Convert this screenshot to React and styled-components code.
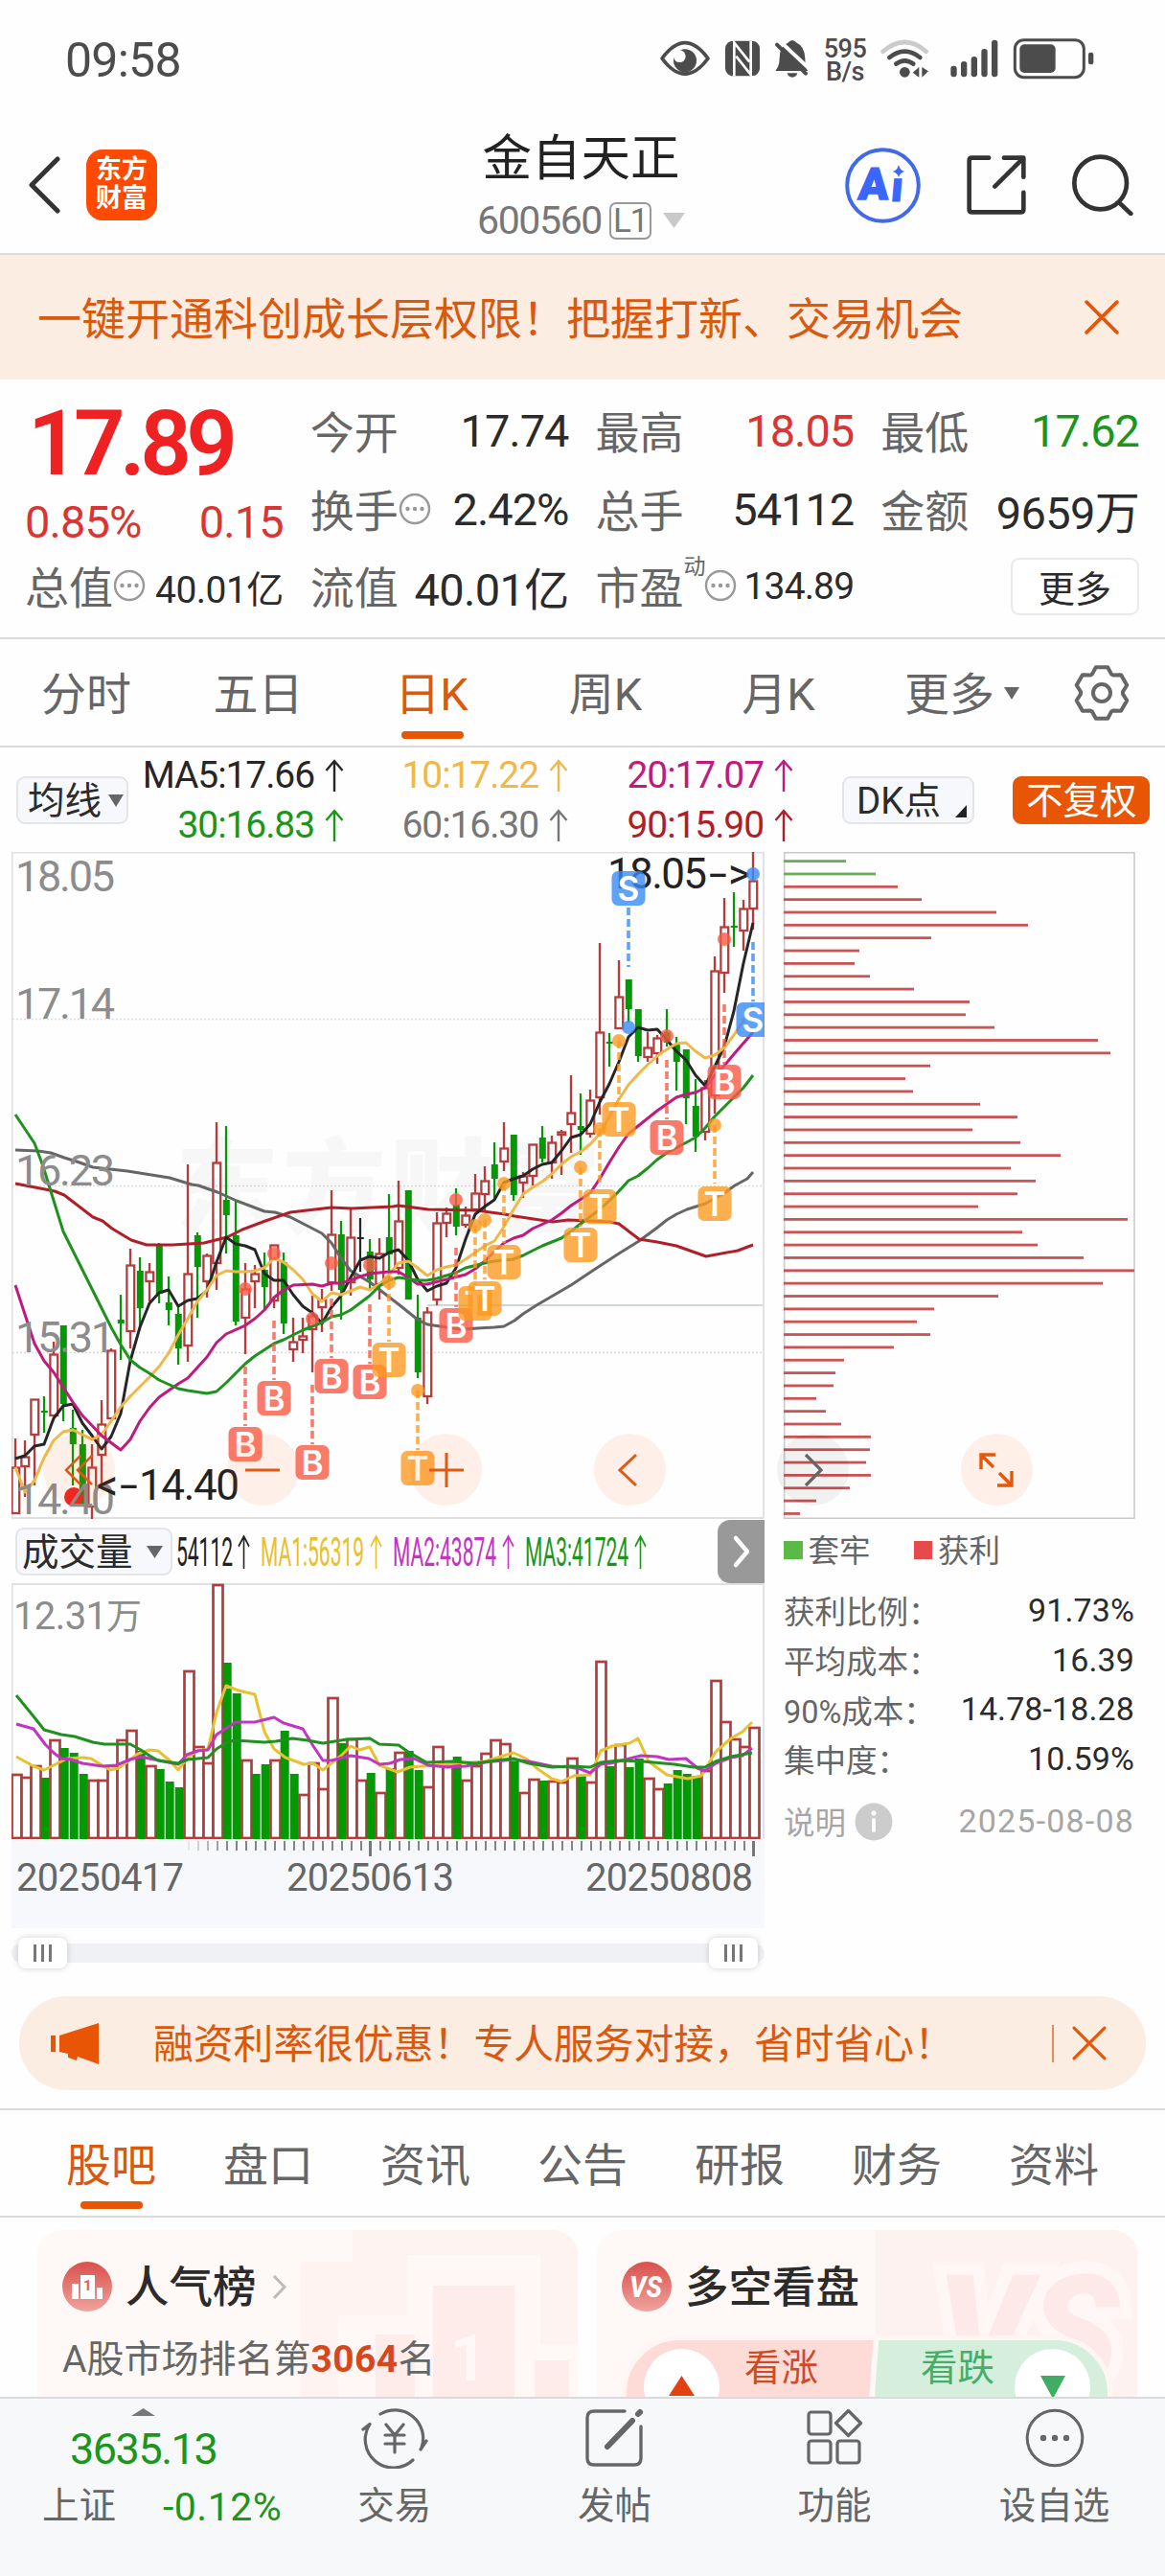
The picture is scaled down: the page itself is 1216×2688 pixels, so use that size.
import React from "react";
import styled, { createGlobalStyle, css } from "styled-components";

const RED = "#b93a3a";
const GREEN = "#029a02";
const ORANGE = "#e85505";

// [type, high, bodyTop, bodyBottom, low], one entry per trading day
const candles = [
  ["r", 612, 642, 690, 690], ["r", 614, 631, 641, 673], ["r", 571, 571, 608, 661], ["g", 568, 583, 585, 606],
  ["r", 511, 524, 588, 588], ["g", 494, 494, 576, 594], ["g", 582, 601, 618, 661], ["g", 603, 618, 681, 681],
  ["r", 618, 642, 683, 696], ["r", 572, 597, 629, 661], ["r", 518, 520, 591, 591], ["g", 462, 488, 492, 530],
  ["r", 414, 431, 500, 518], ["g", 423, 437, 476, 499], ["r", 429, 438, 448, 469], ["g", 408, 409, 461, 471],
  ["g", 443, 470, 478, 494], ["g", 474, 482, 518, 535], ["r", 326, 440, 515, 532], ["g", 397, 400, 433, 486],
  ["r", 419, 421, 448, 465], ["r", 282, 324, 429, 457], ["g", 286, 363, 379, 419], ["g", 363, 400, 490, 494],
  ["r", 429, 456, 486, 524], ["r", 431, 440, 448, 476], ["g", 418, 436, 454, 478], ["r", 410, 410, 468, 476],
  ["g", 418, 428, 492, 503], ["r", 486, 511, 519, 532], ["r", 486, 505, 509, 523], ["r", 463, 484, 498, 543],
  ["r", 456, 467, 475, 501], ["r", 353, 399, 449, 458], ["g", 385, 399, 457, 488], ["r", 372, 402, 449, 463],
  ["k", 382, 402, 403, 438], ["g", 404, 417, 446, 458], ["r", 403, 419, 451, 467], ["g", 357, 402, 420, 447],
  ["r", 343, 385, 434, 441], ["g", 353, 353, 467, 467], ["g", 462, 486, 543, 549], ["r", 475, 480, 568, 576],
  ["r", 376, 387, 467, 473], ["r", 371, 377, 387, 402], ["g", 351, 368, 391, 400], ["r", 370, 379, 389, 392],
  ["r", 336, 356, 373, 374], ["r", 328, 343, 357, 374], ["g", 303, 326, 341, 361], ["r", 282, 309, 323, 333],
  ["g", 295, 295, 358, 364], ["r", 334, 338, 345, 361], ["r", 305, 305, 338, 348], ["g", 286, 298, 320, 324],
  ["r", 296, 303, 324, 341], ["r", 290, 292, 295, 337], ["r", 233, 272, 284, 314], ["g", 252, 286, 290, 316],
  ["r", 248, 259, 294, 298], ["r", 95, 188, 256, 274], ["g", 189, 198, 200, 224], ["r", 113, 151, 184, 184],
  ["g", 133, 133, 164, 178], ["g", 164, 164, 213, 219], ["r", 188, 204, 214, 219], ["r", 191, 194, 210, 221],
  ["g", 164, 188, 199, 203], ["g", 193, 201, 219, 249], ["g", 206, 206, 257, 284], ["g", 237, 265, 297, 313],
  ["r", 238, 246, 292, 301], ["r", 109, 124, 254, 273], ["r", 48, 78, 126, 147], ["g", 42, 77, 79, 99],
  ["r", 50, 59, 82, 103], ["r", 0, 30, 59, 81],
];

const ma5 = [
  633, 630, 620, 618, 591, 578, 576, 596, 609, 623, 610, 586, 531, 496, 471, 460, 457, 474, 468, 466,
  458, 428, 402, 409, 411, 415, 440, 447, 447, 462, 474, 481, 492, 475, 463, 444, 426, 422, 424, 418,
  415, 426, 446, 458, 453, 450, 434, 404, 378, 370, 363, 345, 341, 338, 331, 326, 324, 312, 298, 295,
  284, 261, 242, 219, 193, 183, 186, 185, 196, 208, 217, 233, 244, 224, 203, 166, 116, 74,
];
const ma10 = [
  642, 668, 656, 632, 614, 605, 603, 608, 613, 608, 594, 579, 568, 558, 548, 537, 523, 504, 487, 469,
  457, 442, 437, 438, 438, 437, 434, 424, 428, 436, 446, 461, 469, 460, 462, 458, 454, 457, 451, 441,
  429, 427, 434, 442, 436, 433, 431, 425, 418, 411, 406, 391, 373, 357, 350, 344, 336, 326, 318, 313,
  305, 294, 276, 258, 243, 232, 222, 213, 206, 200, 199, 208, 215, 212, 204, 191, 176, 159,
];
const daily = (values) => values.map((v, i) => `${16 + i * 10},${v}`).join(" ");

const averages = [
  { color: "#666666", points: "16,311 40,312 53,314 67,319 80,323 97,329 133,333 177,340 200,347 207,348 227,355 247,364 276,375 287,376 303,381 336,398 346,408 356,424 366,437 386,449 416,472 436,488 446,493 466,496 483,498 516,496 526,495 537,489 546,482 560,473 596,452 620,436 646,419 667,406 686,392 696,384 706,378 717,373 736,367 756,356 767,348 780,341 786,334" },
  { color: "#b01f28", points: "16,346 47,352 57,354 67,358 97,381 107,385 117,393 137,405 153,410 180,410 213,408 237,402 253,394 277,385 303,376 346,371 367,372 410,370 416,369 447,373 497,374 527,378 537,380 577,386 593,384 637,386 646,388 667,404 686,407 706,411 737,422 770,416 786,410" },
  { color: "#262626", points: daily(ma5) },
  { color: "#f0b84a", points: daily(ma10) },
  { color: "#bf1a7c", points: "16,452 36,513 46,531 56,543 76,574 86,588 106,609 126,624 136,613 146,594 156,580 166,569 186,555 196,549 216,527 226,512 236,503 256,494 266,487 276,478 286,465 296,457 306,452 326,451 336,453 346,450 356,450 366,447 376,443 386,440 406,438 416,438 426,444 436,451 446,451 466,446 486,441 496,435 506,427 516,417 526,408 536,403 546,400 556,393 576,384 586,377 596,369 616,356 626,341 636,324 646,308 656,294 666,286 686,270 696,263 706,256 716,253 726,251 736,246 746,233 756,223 766,211 786,188" },
  { color: "#1f911f", points: "16,274 36,304 45,328 53,354 66,396 86,436 106,476 116,496 126,514 136,530 146,538 156,544 166,551 186,560 196,562 216,565 226,563 236,554 246,544 256,534 266,526 286,513 296,509 316,499 336,491 346,485 356,483 366,478 386,463 396,453 406,447 416,444 436,447 446,447 456,445 476,439 486,434 506,429 516,427 536,425 546,421 566,411 586,403 596,396 606,388 626,373 636,364 646,354 656,343 666,338 676,330 686,321 696,314 726,298 736,288 746,276 766,256 776,246 786,233" },
];

// [letter, x, badge centre, dash start, dash end, dot]
const signals = [
  ["B", 256, 618, 537, 599, 456], ["B", 286, 570, 489, 551, 419], ["B", 326, 637, 556, 618, 487],
  ["B", 346, 547, 466, 528, 429], ["B", 386, 553, 472, 534, 431], ["T", 406, 530, 449, 511, 449],
  ["T", 436, 643, 562, 624, 562], ["B", 476, 494, 413, 475, 363], ["T", 496, 471, 390, 452, 390],
  ["T", 506, 466, 384, 446, 384], ["T", 526, 428, 346, 408, 346], ["T", 606, 410, 329, 391, 329],
  ["T", 626, 370, 289, 349, 289], ["T", 646, 279, 197, 258, 197], ["S", 656, 38, 58, 120, 183],
  ["B", 696, 298, 217, 279, 192], ["T", 746, 367, 285, 346, 285], ["B", 756, 240, 159, 221, 91],
  ["S", 786, 175, 94, 156, 23],
];
const signalColors = { B: "#fa5a46", T: "#fd9a22", S: "#3a8bf7" };

const volumes = [
  "r199", "r202", "r190", "g203", "r163", "g172", "g177", "g199", "r205", "r205", "r190", "r163", "r153",
  "g175", "r190", "g194", "g207", "g213", "r91", "r170", "r187", "r1", "g83", "g115", "r184", "g199",
  "g189", "r184", "g154", "g199", "r220", "r187", "r214", "r119", "g167", "r162", "r205", "g198", "r218",
  "g193", "r176", "g175", "g195", "r212", "r170", "r189", "g181", "r205", "r190", "r177", "r163", "r167",
  "g186", "r218", "r204", "g206", "r206", "r207", "r182", "g201", "r207", "r81", "g191", "r168", "g192",
  "g183", "r203", "r214", "g209", "g195", "g199", "g201", "r195", "r101", "r144", "r162", "r170", "r150",
];
const volumeLines = [
  { color: "#e9c02d", points: "17,181 35,191 46,195 56,190 70,183 86,182 95,183 115,195 124,193 144,178 156,174 165,175 177,185 186,195 195,183 206,175 217,173 226,135 236,107 249,112 266,116 276,155 286,173 298,182 317,189 327,188 337,195 356,180 366,170 375,174 386,171 396,190 415,197 428,192 467,189 475,188 506,186 536,177 549,183 560,193 576,204 586,207 599,201 616,200 627,175 639,170 657,167 666,162 677,186 696,200 718,204 732,201 747,176 763,162 775,155 785,145" },
  { color: "#c334c3", points: "17,147 35,152 47,168 56,177 64,183 74,184 86,188 107,191 121,190 136,184 147,181 156,183 171,186 186,189 195,179 206,175 217,174 226,158 246,145 266,145 286,140 296,146 316,152 327,170 337,185 346,185 366,180 385,183 396,189 407,188 418,184 432,183 447,190 467,192 486,191 506,187 536,184 552,186 576,191 595,192 606,194 616,198 627,189 637,188 657,183 669,180 686,181 698,184 716,183 728,193 736,196 747,188 763,182 775,180 785,172" },
  { color: "#1f911f", points: "17,117 35,139 46,153 64,158 78,160 97,166 109,168 136,168 147,174 156,180 165,185 186,188 196,184 217,182 226,173 237,166 245,164 276,166 288,165 305,162 321,164 337,167 362,163 386,162 396,168 416,169 426,176 445,187 473,186 496,188 517,185 536,183 552,188 576,192 595,191 616,192 627,187 647,185 671,186 704,189 724,192 736,192 747,186 763,181 785,177" },
];

const chips = [
  65, 96, 119, 144, 222, 255, 154, 79, 74, 90, 136, 194, 190, 220, 328, 341, 153, 127, 135, 205, 244, 197,
  247, 289, 237, 263, 244, 203, 359, 249, 265, 313, 366, 333, 224, 157, 139, 153, 115, 63, 54, 52, 34, 44,
  60, 91, 90, 86, 91, 69, 34, 17,
];

const GlobalStyle = createGlobalStyle`
  * { box-sizing: border-box; }
  body {
    margin: 0;
    background: #fff;
    font-family: Roboto, "Noto Sans CJK SC", sans-serif;
    color: #666;
  }
`;

const Page = styled.div`
  width: 1216px;
  height: 2688px;
  overflow: hidden;
  background: #fefefe;
  white-space: nowrap;
`;

/* ---------- status bar ---------- */
const StatusBar = styled.div`
  height: 125px;
  padding: 0 74px 0 68px;
  display: flex;
  align-items: flex-start;
  justify-content: space-between;
  color: #4c4c4c;
`;
const Clock = styled.div`
  margin-top: 35px;
  font-size: 50px;
  line-height: 56px;
  letter-spacing: -0.015em;
`;
const StatusIcons = styled.div`
  display: flex;
  margin-top: 40px;
  svg { display: block; height: 43.33px; }
`;
const Speed = styled.div`
  width: 60px;
  text-align: center;
  font-size: 27px;
  line-height: 23.5px;
  font-weight: 500;
  letter-spacing: -0.02em;
`;

/* ---------- header ---------- */
const Header = styled.header`
  height: 141px;
  padding: 0 33px 0 30px;
  display: grid;
  grid-template-columns: 1fr auto 1fr;
  border-bottom: 2px solid #dadada;
`;
const HeaderSide = styled.div`
  display: flex;
  align-items: center;
  height: 136px;
  ${(p) => p.$end && css`justify-content: flex-end; gap: 48px;`}
`;
const Logo = styled.div`
  margin-left: 27px;
  width: 74px;
  height: 74px;
  padding-top: 6px;
  border-radius: 17px;
  background: #ff4a00;
  color: #fff;
  font-size: 27px;
  font-weight: 700;
  line-height: 30px;
  text-align: center;
`;
const Title = styled.div`
  text-align: center;
  margin-top: 8px;
  h1 {
    margin: 0;
    font-size: 51.5px;
    font-weight: 400;
    line-height: 66px;
    color: #222;
  }
`;
const Code = styled.div`
  display: flex;
  align-items: center;
  justify-content: center;
  height: 64px;
  padding-bottom: 2px;
  font-size: 41px;
  letter-spacing: -0.034em;
  color: #777;
  svg { margin-left: 12px; }
`;
const Level = styled.span`
  margin-left: 8px;
  width: 44px;
  height: 39px;
  border: 2px solid #999;
  border-radius: 7px;
  font-size: 35px;
  line-height: 36px;
  text-align: center;
`;

/* ---------- banner ---------- */
const Banner = styled.div`
  height: 130px;
  padding: 0 48px 4px 39px;
  display: flex;
  align-items: center;
  justify-content: space-between;
  background: #fcede3;
  color: #d9590f;
  font-size: 46px;
  svg { margin-top: 3px; }
`;

/* ---------- quote ---------- */
const Quote = styled.section`
  height: 271px;
  padding: 13px 27px 0 26px;
  display: grid;
  grid-template-columns: repeat(4, 1fr);
  grid-template-rows: 82px 82px 78px;
  column-gap: 28px;
  border-bottom: 2px solid #dadada;
`;
const PriceBlock = styled.div`
  grid-row: span 2;
  color: #d93535;
`;
const Price = styled.div`
  padding-left: 3px;
  font-size: 94px;
  font-weight: 600;
  line-height: 108px;
  letter-spacing: -0.06em;
  color: #ee2222;
`;
const Change = styled.div`
  display: flex;
  justify-content: space-between;
  font-size: 47px;
  line-height: 56px;
  letter-spacing: -0.02em;
`;
const Cell = styled.div`
  display: flex;
  align-items: center;
  padding-bottom: 4px;
  font-size: 46px;
  color: #666;
  svg { margin-top: 2px; }
`;
const Value = styled.span`
  margin-left: auto;
  padding-top: 3px;
  font-size: ${(p) => (p.$small ? 39 : 47)}px;
  letter-spacing: ${(p) => (p.$mixed ? -0.014 : -0.022)}em;
  color: ${(p) => p.$color || "#2b2b2b"};
`;
const Sup = styled.sup`
  align-self: flex-start;
  margin-right: -2px;
  font-size: 23px;
  line-height: 38px;
`;
const MoreButton = styled.button`
  margin: 3px 0 0 auto;
  width: 134px;
  height: 60px;
  padding: 0 0 4px;
  border: 2px solid #e9e9eb;
  border-radius: 9px;
  background: #fff;
  font: 38px Roboto, "Noto Sans CJK SC", sans-serif;
  color: #2b2b2b;
`;

/* ---------- tabs ---------- */
const PeriodTabs = styled.nav`
  height: 113px;
  display: flex;
  align-items: center;
  border-bottom: 2px solid #dadada;
  svg { display: block; }
`;
const Tab = styled.div`
  position: relative;
  width: ${(p) => p.$width}px;
  height: 100%;
  padding-bottom: 4px;
  display: flex;
  align-items: center;
  justify-content: center;
  gap: 10px;
  font-size: 47px;
  color: ${(p) => (p.$active ? "#d9590f" : "#666")};
  ${(p) => p.$active && css`
    &::after {
      content: "";
      position: absolute;
      left: calc(50% - 32px);
      bottom: 7px;
      width: 65px;
      height: 8px;
      border-radius: 4px;
      background: ${ORANGE};
    }
  `}
  svg { margin-top: 5px; }
`;

/* ---------- moving averages ---------- */
const MaRow = styled.div`
  height: 109px;
  padding: 0 16px 0 17px;
  display: flex;
  align-items: center;
`;
const Chip = styled.div`
  position: relative;
  width: ${(p) => p.$width}px;
  height: 50px;
  margin-left: ${(p) => p.$left || 0};
  padding: 0 0 5px ${(p) => p.$pad || 10}px;
  display: flex;
  align-items: center;
  gap: ${(p) => p.$gap || 7}px;
  border: 2px solid ${(p) => (p.$solid ? ORANGE : "#e3e5e9")};
  border-radius: 9px;
  background: ${(p) => (p.$solid ? ORANGE : "#f7f8fb")};
  color: ${(p) => (p.$solid ? "#fff" : "#2b2b2b")};
  font-size: 38.5px;
  svg { margin-top: 6px; }
`;
const Corner = styled.svg`
  position: absolute;
  right: 6px;
  bottom: 5px;
`;
const MaGrid = styled.div`
  width: 694px;
  display: grid;
  grid-template-columns: 225px 234px 235px;
  line-height: 52px;
  font-size: 39px;
  letter-spacing: -0.028em;
`;
const MaValue = styled.div`
  display: flex;
  align-items: center;
  justify-content: flex-end;
  gap: 11px;
  color: ${(p) => p.$color};
`;

/* ---------- chart area ---------- */
const ChartArea = styled.section`
  position: relative;
  height: 1174px;
  padding-left: 12px;
  display: flex;
  gap: 20px;
  svg { display: block; }
`;
const ChartColumn = styled.div`
  width: 786px;
`;
const RoundButton = styled.button`
  position: absolute;
  left: ${(p) => p.$x - 37.5}px;
  top: 607px;
  width: 75px;
  height: 75px;
  padding: 0;
  display: flex;
  align-items: center;
  justify-content: center;
  border: 0;
  border-radius: 50%;
  background: ${(p) => (p.$muted ? "rgba(0,0,0,.05)" : "rgba(250,100,20,.09)")};
`;
const IndicatorRow = styled.div`
  height: 67px;
  padding-left: 4px;
  display: flex;
  align-items: center;
`;
const Squeezed = styled.div`
  width: ${(p) => p.$width}px;
  margin-left: ${(p) => p.$gap}px;
  display: flex;
  align-items: center;
  justify-content: space-between;
  color: ${(p) => p.$color};
  span {
    width: 0;
    font-size: 43px;
    transform: scaleX(0.488);
    transform-origin: left;
  }
`;
const NextButton = styled.div`
  margin-left: auto;
  width: 49px;
  height: 66px;
  display: flex;
  align-items: center;
  justify-content: center;
  border-radius: 13px 0 0 13px;
  background: #999;
`;
const Slider = styled.div`
  margin-top: 16px;
  height: 20px;
  padding: 0 7px;
  display: flex;
  align-items: center;
  justify-content: space-between;
  border-radius: 10px;
  background: #f0f1f4;
`;
const Thumb = styled.div`
  width: 51px;
  height: 32px;
  display: flex;
  align-items: center;
  justify-content: center;
  gap: 5.5px;
  border-radius: 8px;
  background: #fff;
  box-shadow: 0 0 7px rgba(0, 0, 0, 0.18);
  i { width: 2.5px; height: 18px; background: #777; }
`;

const ChipColumn = styled.div`
  width: 366px;
`;
const Legend = styled.div`
  height: 65px;
  padding-bottom: 4px;
  display: flex;
  align-items: center;
  font-size: 32.5px;
`;
const Square = styled.i`
  width: 19.5px;
  height: 19.5px;
  margin: 4px 6px 0 ${(p) => p.$gap || 0}px;
  background: ${(p) => p.$color};
`;
const Stats = styled.div`
  padding-top: 4px;
`;
const Stat = styled.div`
  height: 51.7px;
  margin-top: ${(p) => (p.$muted ? 13 : 0)}px;
  display: flex;
  align-items: center;
  font-size: 32.5px;
  color: ${(p) => (p.$muted ? "#a6a6a6" : "#666")};
  svg { margin: 2px 0 0 9px; }
  b {
    margin-left: auto;
    font-weight: 400;
    font-size: 34px;
    letter-spacing: ${(p) => (p.$muted ? 0.035 : 0.003)}em;
    color: ${(p) => (p.$muted ? "#a6a6a6" : "#2b2b2b")};
  }
`;

/* ---------- promo ---------- */
const Promo = styled.div`
  height: 98px;
  margin: 20px 20px 19px;
  padding: 0 41px 0 33px;
  display: flex;
  align-items: center;
  border-radius: 49px;
  background: #fcede3;
  color: #d9590f;
  font-size: 41.8px;
  p { margin: 0 auto 0 57px; padding-bottom: 4px; }
  em { width: 2px; height: 39px; margin-right: 19px; background: #e58b58; }
`;
const ForumTabs = styled.nav`
  height: 114px;
  padding-left: 34px;
  display: flex;
  border-top: 2px solid #dadada;
  border-bottom: 2px solid #dadada;
`;

/* ---------- cards ---------- */
const Cards = styled.section`
  height: 187px;
  padding: 13px 29px 0 39px;
  display: flex;
  gap: 20px;
  overflow: hidden;
`;
const Card = styled.article`
  position: relative;
  width: 564px;
  height: 260px;
  border-radius: 26px;
  overflow: hidden;
  background: #fef8f6;
`;
const Decor = styled.svg`
  position: absolute;
  inset: 0;
`;
const CardBody = styled.div`
  position: relative;
  padding: 30px 26px;
`;
const CardTitle = styled.div`
  display: flex;
  align-items: center;
  height: 58px;
  font-size: 45.5px;
  font-weight: 500;
  color: #2b2b2b;
  svg { margin-right: 14px; }
  span { padding-bottom: 7px; }
  svg + span + svg { margin: 0 0 0 16px; }
`;
const Rank = styled.div`
  margin-top: 17px;
  line-height: 60px;
  font-size: 39px;
  letter-spacing: 0;
  b { color: #d4481c; letter-spacing: 0.01em; }
`;
const Vote = styled.div`
  position: absolute;
  left: 26px;
  top: 110px;
  width: 512px;
  height: 180px;
  padding: 0 18px;
  display: flex;
  justify-content: space-between;
  border: 5px solid #fff6f4;
  border-radius: 60px;
  background: linear-gradient(94deg, #fddcd8 50%, #fff8f6 50.2%, #fff8f6 51.1%, #d6efdd 51.3%);
  font-size: 38.5px;
`;
const VoteSide = styled.div`
  display: flex;
  gap: ${(p) => p.$gap}px;
  color: ${(p) => p.$color};
  span { margin-top: 4px; line-height: 50px; }
  div {
    margin-top: 9px;
    width: 79px;
    height: 79px;
    padding-top: 28px;
    border-radius: 50%;
    background: #fff;
  }
  svg { display: block; margin: 0 auto; }
`;

/* ---------- bottom bar ---------- */
const BottomBar = styled.footer`
  height: 188px;
  display: flex;
  border-top: 2px solid #d9dadd;
  background: #f7f8fa;
  font-size: 38.5px;
`;
const IndexBox = styled.div`
  width: 297px;
  padding: 10px 4px 0 44px;
  svg { display: block; margin-left: 93px; }
  color: #1a961a;
`;
const IndexValue = styled.div`
  margin: 13px 0 0 29px;
  font-size: 45px;
  line-height: 44px;
  letter-spacing: -0.033em;
`;
const IndexChange = styled.div`
  display: flex;
  gap: 49px;
  margin-top: 10px;
  line-height: 56px;
  font-size: 41px;
  letter-spacing: 0.012em;
  span { color: #666; font-size: 38.5px; letter-spacing: 0; line-height: 54px; }
`;
const NavItem = styled.div`
  width: 229.6px;
  padding-top: 9px;
  text-align: center;
  svg { display: block; margin: 0 auto 11px; }
  line-height: 56px;
`;

/* ---------- icons ---------- */
const Close = ({ size = 34, w = 3.4 }) => (
  <svg width={size} height={size} viewBox="0 0 34 34" stroke={ORANGE} strokeWidth={w} strokeLinecap="round">
    <path d="M2 2 32 32M32 2 2 32" />
  </svg>
);
const Triangle = ({ width, height, color = "#666", up }) => (
  <svg width={width} height={height} viewBox="0 0 20 20" preserveAspectRatio="none">
    <path d={up ? "M10 0 20 20H0z" : "M0 0H20L10 20z"} fill={color} />
  </svg>
);
const Arrow = ({ width = 20, height = 34 }) => (
  <svg width={width} height={height} viewBox="0 0 20 34" preserveAspectRatio="none" fill="none" stroke="currentColor" strokeWidth="2.4">
    <path d="M10 34V2M1.5 12 10 2 18.5 12" />
  </svg>
);
const Dots = () => (
  <svg width="34" height="34" viewBox="0 0 34 34">
    <circle cx="17" cy="17" r="15" fill="none" stroke="#999" strokeWidth="2.4" />
    <g fill="#999">
      <circle cx="9.5" cy="17" r="2.2" /><circle cx="17" cy="17" r="2.2" /><circle cx="24.5" cy="17" r="2.2" />
    </g>
  </svg>
);
const Gear = () => {
  const pts = [];
  for (let i = 0; i < 6; i++) {
    [[-27, 22], [-13, 27.5], [13, 27.5], [27, 22]].forEach(([deg, r]) => {
      const a = ((i * 60 + deg - 90) * Math.PI) / 180;
      pts.push(`${(30 + r * Math.cos(a)).toFixed(1)},${(30 + r * Math.sin(a)).toFixed(1)}`);
    });
  }
  return (
    <svg width="60" height="60" viewBox="0 0 60 60" fill="none" stroke="#666" strokeWidth="4" strokeLinejoin="round">
      <polygon points={pts.join(" ")} />
      <circle cx="30" cy="30" r="9" />
    </svg>
  );
};

const StatusGlyphs = () => (
  <StatusIcons>
    <svg width="60" viewBox="30 30 180 130" fill="#4c4c4c">
      <path d="M36 93Q108-5 180 93Q108 190 36 93Z" fill="none" stroke="#4c4c4c" strokeWidth="11" strokeLinejoin="round" />
      <circle cx="108" cy="100" r="36" />
      <circle cx="91" cy="86" r="19" fill="#fefefe" />
    </svg>
    <svg width="52" viewBox="210 30 156 130">
      <rect x="234" y="38" width="108" height="110" rx="24" fill="#4c4c4c" />
      <path d="M262 148V44L310 104M314 38V144L268 86" fill="none" stroke="#fefefe" strokeWidth="8" />
    </svg>
    <svg width="51.33" viewBox="366 30 154 130">
      <path d="M391 132Q404 116 404 92Q404 54 430 44Q444 28 458 44Q482 54 484 92Q484 116 492 132Z" fill="#4c4c4c" />
      <path d="M428 139H460Q456 152 444 152T428 139Z" fill="#4c4c4c" />
      <path d="M400 34 500 128" stroke="#fefefe" strokeWidth="12" />
      <path d="M396 50 486 140" stroke="#4c4c4c" strokeWidth="12" strokeLinecap="round" />
    </svg>
    <Speed>595<br />B/s</Speed>
    <svg width="68.33" viewBox="700 30 205 130" fill="none" stroke="#4c4c4c" strokeWidth="14" strokeLinecap="round">
      <path d="M729 71Q797 13 864 71" stroke="#cbcbcb" />
      <path d="M749 90Q797 52 845 90M770 110Q797 90 824 110" />
      <circle cx="797" cy="136" r="16" fill="#4c4c4c" stroke="none" />
      <path d="M822 137 842 120V152ZM871 133 851 120V152Z" fill="#4c4c4c" stroke="none" />
    </svg>
    <svg width="68.33" viewBox="905 30 205 130" fill="#4c4c4c">
      {[116, 102, 87, 63, 35].map((y, i) => (
        <rect key={y} x={942 + i * 32} y={y} width="19" height={151 - y} rx="9" />
      ))}
    </svg>
    <svg width="93.33" viewBox="1110 30 280 130" fill="#4c4c4c">
      <rect x="1141" y="35" width="216" height="117" rx="28" fill="none" stroke="#4c4c4c" strokeWidth="9" />
      <rect x="1156" y="49" width="112" height="89" rx="15" />
      <rect x="1371" y="74" width="16" height="38" rx="7" />
    </svg>
  </StatusIcons>
);

/* ---------- charts ---------- */
const Signal = ({ data }) => {
  const [letter, x, y, from, to, dot] = data;
  const color = signalColors[letter];
  return (
    <g>
      <path d={`M${x} ${from}V${to}`} stroke={color} strokeOpacity="0.8" strokeWidth="3.6" strokeDasharray="8 4" />
      <circle cx={x} cy={dot} r="7" fill={color} fillOpacity="0.8" />
      <rect x={x - 17.5} y={y - 18} width="35" height="36" rx="6.5" fill={color} fillOpacity="0.8" />
      <text x={x} y={y + 13} textAnchor="middle" fontSize="35" fontWeight="600" fill="#fff" fontFamily="Inter">{letter}</text>
    </g>
  );
};

const KLine = () => (
  <svg width="786" height="696" viewBox="12 0 786 696">
    <text x="183" y="389" fontSize="108" letterSpacing="4" fontWeight="900" fill="#f7f7f7" fontFamily="Noto Sans CJK SC">东方财富</text>
    <path d="M13 174.5H797M13 348.5H797M13 522.5H797" stroke="#dcdcdc" strokeWidth="1.5" strokeDasharray="2 2" />
    <path d="M446 473H797" stroke="#d0d6d5" strokeWidth="2" />
    <path d="M12.7 695V0.7H797V695Z" fill="none" stroke="#e0e0e0" strokeWidth="1.8" />
    {candles.map(([type, high, top, bottom, low], i) => {
      const x = 16 + i * 10;
      const color = type === "r" ? RED : type === "g" ? GREEN : "#262626";
      if (type === "r") {
        return (
          <g key={i} stroke={color} strokeWidth="2.3" fill="none">
            <path d={`M${x} ${high}V${top}M${x} ${bottom}V${low}`} />
            <rect x={x - 3.6} y={top + 0.5} width="7.8" height={bottom - top - 0.5} />
          </g>
        );
      }
      return (
        <g key={i} fill={color}>
          <rect x={x - 1.1} y={high} width="2.2" height={low - high} />
          <rect x={x - 3.2} y={top} width="7" height={Math.max(bottom - top, 2)} />
        </g>
      );
    })}
    {averages.map((l) => (
      <polyline key={l.color} points={l.points} fill="none" stroke={l.color} strokeWidth="3" strokeLinejoin="round" />
    ))}
    <circle cx="77" cy="673" r="10" fill="#ee2222" />
    <g fill="#8c8c8c" fontSize="45">
      {[["18.05", 41], ["17.14", 174], ["16.23", 348], ["15.31", 522], ["14.40", 691]].map(([t, y]) => (
        <text key={t} x="16" y={y} textLength="104">{t}</text>
      ))}
    </g>
    <g fill="#222" fontSize="44">
      <text x="634" y="38" textLength="104">18.05</text>
      <text x="740" y="38" textLength="19" lengthAdjust="spacingAndGlyphs">-</text>
      <text x="760" y="38" textLength="22">&gt;</text>
      <text x="101" y="676" textLength="22">&lt;</text>
      <text x="125" y="676" textLength="19" lengthAdjust="spacingAndGlyphs">-</text>
      <text x="145" y="676" textLength="105">14.40</text>
    </g>
    {signals.map((s) => <Signal key={s[1]} data={s} />)}
  </svg>
);

const Volume = () => (
  <svg width="786" height="267" viewBox="12 0 786 267">
    <path d="M12.7 267V1H797V267" fill="none" stroke="#e0e0e0" strokeWidth="1.8" />
    <text x="14" y="48" fontSize="40" textLength="98" fill="#8c8c8c">12.31</text>
    <text x="111" y="48" fontSize="37" fill="#8c8c8c">万</text>
    {volumes.map((v, i) => {
      const top = Number(v.slice(1));
      const x = 12 + i * 10;
      return v[0] === "r"
        ? <rect key={i} x={x + 0.5} y={top + 1} width="10" height={265 - top} fill="#fff" stroke={RED} strokeWidth="2.7" />
        : <rect key={i} x={x + 0.7} y={top} width="9" height={267 - top} fill={GREEN} />;
    })}
    {volumeLines.map((l) => (
      <polyline key={l.color} points={l.points} fill="none" stroke={l.color} strokeWidth="3" strokeLinejoin="round" />
    ))}
  </svg>
);

const Axis = () => (
  <svg width="786" height="93" viewBox="12 0 786 93">
    <rect x="12" width="786" height="93" fill="#f7f8fb" />
    {Array.from({ length: 60 }, (_, i) => {
      const x = 197 + i * 10;
      const big = i === 19 || i === 59;
      return <path key={i} d={`M${x - (big ? 0.5 : 0)} 2V${big ? 18 : 12}`} stroke="#777" strokeWidth={big ? 3 : 1.8} strokeOpacity={Math.min(1, 0.15 + i * 0.2)} />;
    })}
    <g fill="#666" fontSize="40">
      <text x="17" y="54" textLength="175">20250417</text>
      <text x="299" y="54" textLength="175">20250613</text>
      <text x="611" y="54" textLength="175">20250808</text>
    </g>
  </svg>
);

const ChipChart = () => (
  <svg width="367" height="696" viewBox="0 0 367 696">
    <path d="M0.7 0.7H366V695.3H0.7Z" fill="none" stroke="#c9c9c9" strokeWidth="1.5" />
    {chips.map((w, i) => (
      <rect key={i} x="0" y={8.2 + i * 13.35} width={w} height="2.8" fill={i < 2 ? "#68ad58" : "#cb5353"} />
    ))}
  </svg>
);

const App = () => {
  return (
    <Page>
      <GlobalStyle />
      <StatusBar>
        <Clock>09:58</Clock>
        <StatusGlyphs />
      </StatusBar>

      <Header>
        <HeaderSide>
          <svg width="33" height="60" viewBox="0 0 33 60" fill="none" stroke="#333" strokeWidth="5" strokeLinecap="round" strokeLinejoin="round">
            <path d="M30 3 3 30 30 57" />
          </svg>
          <Logo>东方<br />财富</Logo>
        </HeaderSide>
        <Title>
          <h1>金自天正</h1>
          <Code>
            600560<Level>L1</Level>
            <Triangle width={23} height={16} color="#c9c9c9" />
          </Code>
        </Title>
        <HeaderSide $end>
          <svg width="79" height="79" viewBox="0 0 79 79" fill="#3a66fb">
            <circle cx="39.5" cy="39.5" r="37.3" fill="none" stroke="#4169e8" strokeWidth="4" />
            <text x="14" y="54" fontSize="46" fontWeight="900" stroke="#3a66fb" strokeWidth="1.5" transform="skewX(-4) translate(3 0)">A</text>
            <text x="48" y="56.5" fontSize="44" fontWeight="900" stroke="#3a66fb" strokeWidth="1" transform="skewX(-5) translate(4 0)">ı</text>
            <path d="M56 18Q57.5 24 62.5 25Q57.5 26 56 31Q54.5 26 49.5 25Q54.5 24 56 18Z" />
          </svg>
          <svg width="62" height="62" viewBox="980 395 188 188" fill="none" stroke="#333" strokeWidth="14" strokeLinecap="round" strokeLinejoin="round">
            <path d="M1050 403H997Q988 403 988 412V566Q988 575 997 575H1151Q1160 575 1160 566V513M1098 403H1160V464M1158 405 1069 494" />
          </svg>
          <svg width="64" height="64" viewBox="1318 389 192 192" fill="none" stroke="#333" strokeWidth="14" strokeLinecap="round">
            <circle cx="1407" cy="479" r="82" />
            <path d="M1466 541 1502 575" />
          </svg>
        </HeaderSide>
      </Header>

      <Banner>
        一键开通科创成长层权限！把握打新、交易机会
        <Close size={36} />
      </Banner>

      <Quote>
        <PriceBlock>
          <Price>17.89</Price>
          <Change><span>0.85%</span><span>0.15</span></Change>
        </PriceBlock>
        <Cell>今开<Value>17.74</Value></Cell>
        <Cell>最高<Value $color="#d93535">18.05</Value></Cell>
        <Cell>最低<Value $color="#1a961a">17.62</Value></Cell>
        <Cell>换手<Dots /><Value>2.42%</Value></Cell>
        <Cell>总手<Value>54112</Value></Cell>
        <Cell>金额<Value $mixed>9659万</Value></Cell>
        <Cell>总值<Dots /><Value $small $mixed>40.01亿</Value></Cell>
        <Cell>流值<Value $mixed>40.01亿</Value></Cell>
        <Cell>市盈<Sup>动</Sup><Dots /><Value $small>134.89</Value></Cell>
        <Cell><MoreButton>更多</MoreButton></Cell>
      </Quote>

      <PeriodTabs>
        <Tab $width={180}>分时</Tab>
        <Tab $width={179}>五日</Tab>
        <Tab $width={183} $active>日K</Tab>
        <Tab $width={180}>周K</Tab>
        <Tab $width={181}>月K</Tab>
        <Tab $width={202}>更多<Triangle width={16} height={13} /></Tab>
        <Tab $width={90}><Gear /></Tab>
      </PeriodTabs>

      <MaRow>
        <Chip $width={117}>均线<Triangle width={16} height={13} /></Chip>
        <MaGrid>
          <MaValue $color="#262626">MA5:17.66<Arrow /></MaValue>
          <MaValue $color="#f0b84a">10:17.22<Arrow /></MaValue>
          <MaValue $color="#bf1a7c">20:17.07<Arrow /></MaValue>
          <MaValue $color="#1a961a">30:16.83<Arrow /></MaValue>
          <MaValue $color="#777">60:16.30<Arrow /></MaValue>
          <MaValue $color="#b01f28">90:15.90<Arrow /></MaValue>
        </MaGrid>
        <Chip $width={138} $pad={13} $left="51px">
          DK点
          <Corner width="12" height="13" viewBox="0 0 12 13"><path d="M12 0V13H0z" fill="#222" /></Corner>
        </Chip>
        <Chip $width={143} $pad={12} $left="auto" $solid>不复权</Chip>
      </MaRow>

      <ChartArea>
        <ChartColumn>
          <KLine />
          <IndicatorRow>
            <Chip $width={164} $pad={5} $gap={14}>成交量<Triangle width={17} height={13} /></Chip>
            <Squeezed $width={77} $gap={4} $color="#222"><span>54112</span><Arrow width={13} height={36} /></Squeezed>
            <Squeezed $width={127} $gap={11} $color="#e9c02d"><span>MA1:56319</span><Arrow width={13} height={36} /></Squeezed>
            <Squeezed $width={127} $gap={11} $color="#c334c3"><span>MA2:43874</span><Arrow width={13} height={36} /></Squeezed>
            <Squeezed $width={127} $gap={11} $color="#1a961a"><span>MA3:41724</span><Arrow width={13} height={36} /></Squeezed>
            <NextButton>
              <svg width="20" height="36" viewBox="0 0 20 36" fill="none" stroke="#fff" strokeWidth="4.5" strokeLinecap="round" strokeLinejoin="round">
                <path d="M4 4 16 18 4 32" />
              </svg>
            </NextButton>
          </IndicatorRow>
          <Volume />
          <Axis />
          <Slider>
            <Thumb><i /><i /><i /></Thumb>
            <Thumb><i /><i /><i /></Thumb>
          </Slider>
        </ChartColumn>

        <ChipColumn>
          <ChipChart />
          <Legend>
            <Square $color="#5bb947" />套牢
            <Square $color="#e64b4b" $gap={45} />获利
          </Legend>
          <Stats>
            <Stat>获利比例<span>：</span><b>91.73%</b></Stat>
            <Stat>平均成本<span>：</span><b>16.39</b></Stat>
            <Stat>90%成本<span>：</span><b>14.78-18.28</b></Stat>
            <Stat>集中度<span>：</span><b>10.59%</b></Stat>
            <Stat $muted>
              说明
              <svg width="40" height="40" viewBox="0 0 40 40">
                <circle cx="20" cy="20" r="19.5" fill="#ccc" />
                <circle cx="20" cy="11" r="2.5" fill="#fff" />
                <rect x="18" y="16" width="4" height="15" rx="2" fill="#fff" />
              </svg>
              <b>2025-08-08</b>
            </Stat>
          </Stats>
        </ChipColumn>

        <RoundButton $x={82.5}>
          <svg width="32" height="36" viewBox="0 0 32 36" fill="none" stroke="#dd5b14" strokeWidth="2.6">
            <path d="M17 3 2 18 17 33M29 3 14 18 29 33" />
          </svg>
        </RoundButton>
        <RoundButton $x={274}>
          <svg width="36" height="36" viewBox="0 0 36 36" stroke="#dd5b14" strokeWidth="3"><path d="M0 18H36" /></svg>
        </RoundButton>
        <RoundButton $x={465.5}>
          <svg width="36" height="36" viewBox="0 0 36 36" stroke="#dd5b14" strokeWidth="3"><path d="M0 18H36M18 0V36" /></svg>
        </RoundButton>
        <RoundButton $x={657}>
          <svg width="24" height="36" viewBox="0 0 24 36" fill="none" stroke="#dd5b14" strokeWidth="3"><path d="M19 2 2 18 19 34" /></svg>
        </RoundButton>
        <RoundButton $x={848.5} $muted>
          <svg width="20" height="36" viewBox="0 0 20 36" fill="none" stroke="#666" strokeWidth="3.2"><path d="M2 2 18 18 2 34" /></svg>
        </RoundButton>
        <RoundButton $x={1040}>
          <svg width="38" height="38" viewBox="0 0 38 38" fill="none" stroke="#e2580c" strokeWidth="3.4">
            <path d="M18 3H3V18M4 4 16 16M20 35H35V20M34 34 22 22" />
          </svg>
        </RoundButton>
      </ChartArea>

      <Promo>
        <svg width="50" height="43" viewBox="0 0 50 43" fill={ORANGE}>
          <rect x="0" y="13" width="5" height="17" />
          <path d="M9 13 50 0V43L28 35L27 39L18 36V32L9 30Z" />
        </svg>
        <p>融资利率很优惠！专人服务对接，省时省心！</p>
        <em />
        <Close size={36} w={3} />
      </Promo>

      <ForumTabs>
        {["股吧", "盘口", "资讯", "公告", "研报", "财务", "资料"].map((name, i) => (
          <Tab key={name} $width={164} $active={i === 0}>{name}</Tab>
        ))}
      </ForumTabs>

      <Cards>
        <Card>
          <Decor width="564" height="260" viewBox="0 0 564 260">
            <path d="M275 33H329V0H564V260H275Z" fill="#fef3f1" />
            <path d="M314 89H386V26H525V119H564V260H314Z" fill="#fff8f6" />
            <path d="M353 109H394V260H353ZM413 58H498V260H413ZM519 136H555V260H519Z" fill="#fdecea" />
            <text x="431" y="157" fontSize="66" fontWeight="700" fill="#fff8f6">1</text>
          </Decor>
          <CardBody>
            <CardTitle>
              <svg width="52" height="52" viewBox="0 0 52 52">
                <defs>
                  <linearGradient id="badge" x2="0" y2="1">
                    <stop stopColor="#d9504c" /><stop offset="1" stopColor="#f0a39e" />
                  </linearGradient>
                </defs>
                <circle cx="26" cy="26" r="26" fill="url(#badge)" />
                <path d="M10 23H17V39H10ZM19 14H34V39H19ZM36 27H42V39H36Z" fill="#fff" />
                <text x="22" y="30" fontSize="15" fontWeight="700" fill="#d9605c">1</text>
              </svg>
              <span>人气榜</span>
              <svg width="15" height="25" viewBox="0 0 15 25" fill="none" stroke="#bbb" strokeWidth="3"><path d="M2 1 13 12.5 2 24" /></svg>
            </CardTitle>
            <Rank>A股市场排名第<b>3064</b>名</Rank>
          </CardBody>
        </Card>
        <Card>
          <Decor width="564" height="260" viewBox="0 0 564 260">
            <rect x="291" width="273" height="260" fill="#fef2f0" />
            <text x="355" y="160" fontSize="160" fontWeight="900" fontStyle="italic" fill="#fdeae8" stroke="#fff7f5" strokeWidth="26" paintOrder="stroke" textLength="190" lengthAdjust="spacingAndGlyphs">VS</text>
          </Decor>
          <CardBody>
            <CardTitle>
              <svg width="52" height="52" viewBox="0 0 52 52">
                <circle cx="26" cy="26" r="26" fill="url(#badge)" />
                <text x="25" y="37" textAnchor="middle" fontSize="31" fontWeight="800" fontStyle="italic" fill="#fff" textLength="34" lengthAdjust="spacingAndGlyphs">VS</text>
              </svg>
              <span>多空看盘</span>
            </CardTitle>
          </CardBody>
          <Vote>
            <VoteSide $color="#cf4a25" $gap={26}>
              <div><Triangle up width={27} height={21} color="#e2420f" /></div>
              <span>看涨</span>
            </VoteSide>
            <VoteSide $color="#45ae6b" $gap={21}>
              <span>看跌</span>
              <div><Triangle width={26} height={24} color="#3fae63" /></div>
            </VoteSide>
          </Vote>
        </Card>
      </Cards>

      <BottomBar>
        <IndexBox>
          <Triangle up width={25} height={8} color="#777" />
          <IndexValue>3635.13</IndexValue>
          <IndexChange><span>上证</span>-0.12%</IndexChange>
        </IndexBox>
        <NavItem>
          <svg width="72" height="64" viewBox="-4 0 72 64" fill="none" stroke="#666" strokeWidth="3.2" strokeLinecap="round" strokeLinejoin="round">
            <path d="M17 7A29.5 29.5 0 0 1 60 42M65 35 59 44" />
            <path d="M-1 23 6 17.5A29.5 29.5 0 0 0 51 55" />
            <path d="M23 18 32 29 41 18M32 29V47M22 29H42M22 38H42" />
          </svg>
          交易
        </NavItem>
        <NavItem>
          <svg width="64" height="64" viewBox="0 0 64 64" fill="none" stroke="#666" strokeWidth="3.4" strokeLinecap="round" strokeLinejoin="round">
            <path d="M43 4H11Q4 4 4 11V53Q4 60 11 60H53Q60 60 60 53V20" />
            <path d="M25 41 51 14" strokeWidth="6" />
            <path d="M57 7 59 5" strokeWidth="6" />
          </svg>
          发帖
        </NavItem>
        <NavItem>
          <svg width="64" height="64" viewBox="0 0 64 64" fill="none" stroke="#666" strokeWidth="3.2" strokeLinejoin="round">
            <rect x="5" y="5" width="23" height="23" rx="3" />
            <rect x="5" y="35" width="23" height="23" rx="3" />
            <rect x="35" y="35" width="23" height="23" rx="3" />
            <path d="M46.5 3.5 59.5 16.5 46.5 29.5 33.5 16.5Z" />
          </svg>
          功能
        </NavItem>
        <NavItem>
          <svg width="64" height="64" viewBox="0 0 64 64" fill="#666">
            <circle cx="32" cy="32" r="28.8" fill="none" stroke="#666" strokeWidth="3" />
            <circle cx="20" cy="32" r="3.2" /><circle cx="32" cy="32" r="3.2" /><circle cx="44" cy="32" r="3.2" />
          </svg>
          设自选
        </NavItem>
      </BottomBar>
    </Page>
  );
};

export default App;
